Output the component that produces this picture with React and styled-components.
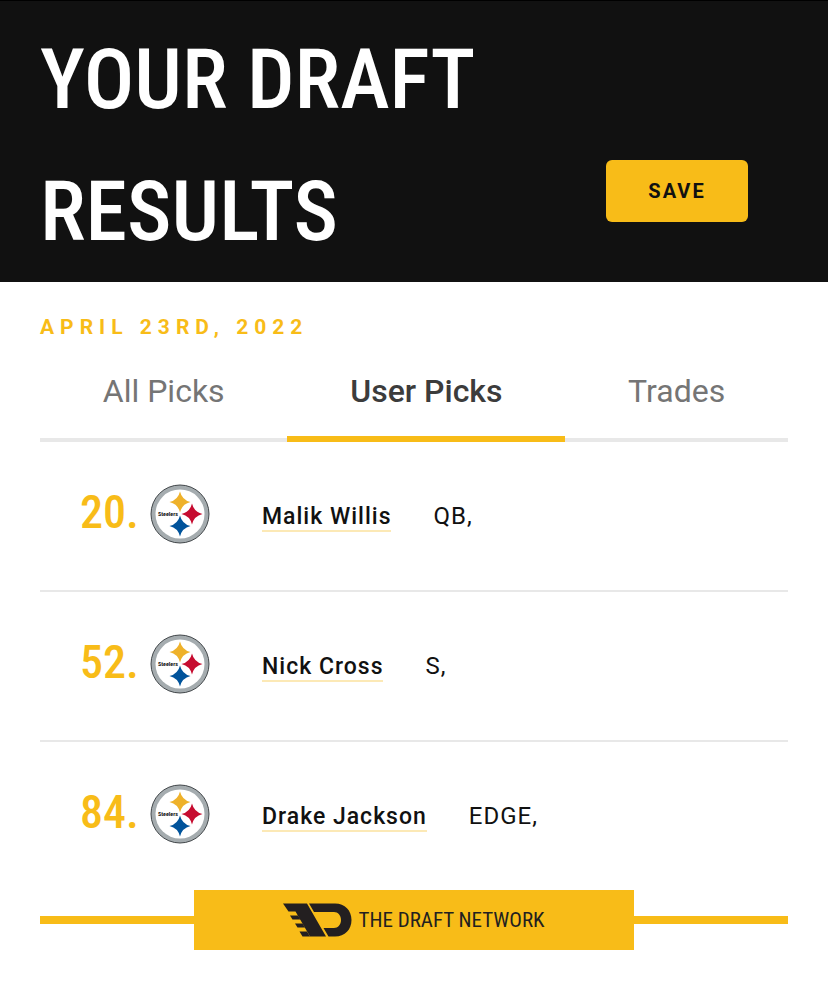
import React from 'react'
import styled, { createGlobalStyle } from 'styled-components'

const gold = '#f8bc18';
const condensed = '"Liberation Sans Narrow", "Roboto Condensed", "Liberation Sans", sans-serif';

const GlobalStyle = createGlobalStyle`
  * { box-sizing: border-box; }
  body {
    margin: 0;
    background: #fff;
    color: #111;
    font-family: Roboto, "Liberation Sans", sans-serif;
  }
`;

const Header = styled.header`
  display: flex;
  align-items: flex-end;
  justify-content: space-between;
  gap: 40px;
  padding: 13px 80px 4px 40px;
  background: #111;
  border-top: 1px solid #000;
`;
const Title = styled.h1`
  flex: 1;
  margin: 0;
  color: #fff;
  font-family: ${condensed};
  font-size: 84px;
  font-weight: 500;
  line-height: 132px;
  text-transform: uppercase;
`;
const SaveButton = styled.button`
  width: 142px;
  height: 62px;
  margin-bottom: 56px;
  border: 0;
  border-radius: 6px;
  background: ${gold};
  color: #111;
  font-family: inherit;
  font-size: 20px;
  font-weight: 700;
  letter-spacing: 2px;
  cursor: pointer;
`;
const Content = styled.main`
  padding: 32px 40px 56px;
`;
const DraftDate = styled.p`
  margin: 0;
  color: ${gold};
  font-size: 21px;
  font-weight: 700;
  letter-spacing: 6px;
  line-height: 26px;
  text-transform: uppercase;
`;
const Tabs = styled.nav`
  display: flex;
  height: 102px;
  box-shadow: inset 0 -4px #e8e8e8;
`;
const Tab = styled.button`
  flex: 1 1 auto;
  padding: 6px 0 0;
  border: 0;
  border-bottom: 6px solid ${props => props.$active ? gold : 'transparent'};
  background: none;
  color: ${props => props.$active ? '#3c3c3c' : '#757575'};
  font-family: inherit;
  font-size: 32px;
  font-weight: ${props => props.$active ? 500 : 400};
  cursor: pointer;
`;
const Picks = styled.ol`
  margin: 0;
  padding: 0;
  list-style: none;
`;
const Pick = styled.li`
  display: flex;
  align-items: center;
  padding: 42px 40px 46px;
  border-bottom: 2px solid #e8e8e8;
  &:last-child { border-bottom: 0; }
`;
const PickNumber = styled.span`
  width: 70px;
  color: ${gold};
  font-family: ${condensed};
  font-size: 46px;
  font-weight: 500;
  line-height: 56px;
  padding-bottom: 4px;
`;
const Player = styled.div`
  display: flex;
  align-items: baseline;
  gap: 42px;
  padding: 6px 0 0 52px;
  font-size: 24px;
  letter-spacing: 1px;
  line-height: 28px;
`;
const PlayerLink = styled.a`
  border-bottom: 2px solid #fce9b6;
  color: #111;
  font-size: 23px;
  font-weight: 500;
  line-height: 26px;
  text-decoration: none;
`;
const Position = styled.span`
  color: #111;
`;
const Footer = styled.footer`
  display: flex;
  align-items: center;
`;
const Rule = styled.div`
  flex: 1;
  height: 8px;
  background: ${gold};
`;
const Brand = styled.a`
  display: flex;
  align-items: center;
  justify-content: center;
  gap: 6px;
  width: 440px;
  height: 60px;
  background: ${gold};
  color: #231f20;
  font-family: ${condensed};
  font-size: 21px;
  text-decoration: none;
`;

const star = 'M0-10.500Q2-2 10.500 0Q2 2 0 10.500Q-2 2-10.500 0Q-2-2 0-10.500Z';

const SteelersLogo = () => (
  <svg width="60" height="60" viewBox="0 0 60 60" role="img" aria-label="Pittsburgh Steelers">
    <circle cx="30" cy="30" r="29" fill="#a5acaf" stroke="#42474a" strokeWidth="1" />
    <circle cx="30" cy="30" r="24.500" fill="#fff" />
    <path d={star} transform="translate(30 18)" fill="#eeb12a" />
    <path d={star} transform="translate(42 30)" fill="#c60c30" />
    <path d={star} transform="translate(30 42)" fill="#00539b" />
    <text x="8" y="32" fontFamily={condensed} fontSize="6" fontWeight="700" fill="#111">Steelers</text>
  </svg>
);

const NetworkLogo = () => (
  <svg width="69" height="34" viewBox="0 0 69 34" fill="#231f20" aria-hidden="true">
    <path d="M0 0.500H24L43 33.500H27L12.500 8.500H5.500Z" />
    <path d="M7 12.500H15L17.500 16.500H9.500ZM12 20.500H19.500L22 24.500H14.500ZM16.500 28.500H24L27 33.500H19.500Z" />
    <path d="M26 0.500H52C62 0.500 68.500 7.500 68.500 17S62 33.500 52 33.500H45.500L40.500 25H51C55 25 58 21.500 58 17S55 9 51 9H31Z" />
  </svg>
);

const tabs = ['All Picks', 'User Picks', 'Trades'];
const picks = [
  { number: 20, name: 'Malik Willis', position: 'QB' },
  { number: 52, name: 'Nick Cross', position: 'S' },
  { number: 84, name: 'Drake Jackson', position: 'EDGE' },
];

export default function App() {
  const [active, setActive] = React.useState('User Picks');

  return (
    <>
      <GlobalStyle />
      <Header>
        <Title>Your Draft Results</Title>
        <SaveButton type="button">SAVE</SaveButton>
      </Header>
      <Content>
        <DraftDate>April 23rd, 2022</DraftDate>
        <Tabs>
          {tabs.map(tab => (
            <Tab key={tab} type="button" $active={tab === active} onClick={() => setActive(tab)}>{tab}</Tab>
          ))}
        </Tabs>
        <Picks>
          {picks.map(pick => (
            <Pick key={pick.number}>
              <PickNumber>{pick.number}.</PickNumber>
              <SteelersLogo />
              <Player>
                <PlayerLink href="#">{pick.name}</PlayerLink>
                <Position>{pick.position},</Position>
              </Player>
            </Pick>
          ))}
        </Picks>
        <Footer>
          <Rule />
          <Brand href="#"><NetworkLogo />THE DRAFT NETWORK</Brand>
          <Rule />
        </Footer>
      </Content>
    </>
  )
}
